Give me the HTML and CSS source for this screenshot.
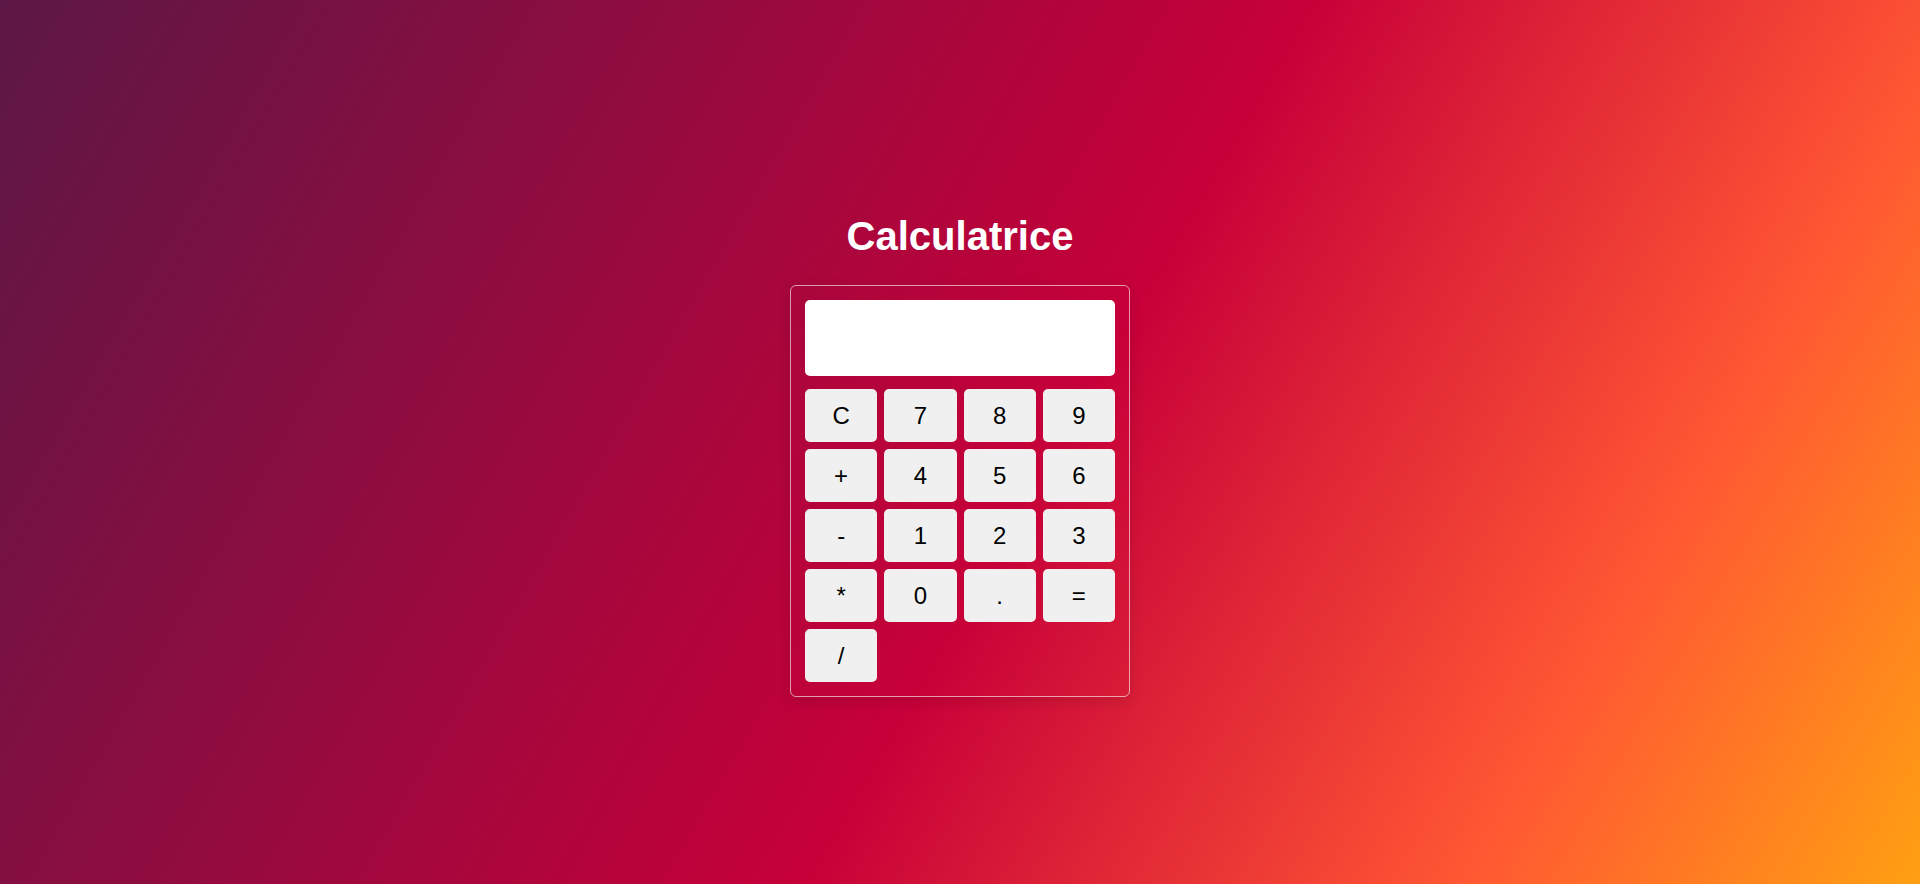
FILE: index.html
```html
<!DOCTYPE html>
<html lang="fr">
<head>
<meta charset="UTF-8">
<title>Calculatrice</title>
<link rel="stylesheet" href="styles.css">
</head>
<body>
  <h1 class="title">Calculatrice</h1>
  <div class="calculator">
    <div class="display"></div>
    <div class="keys">
      <button class="key">C</button>
      <button class="key">7</button>
      <button class="key">8</button>
      <button class="key">9</button>
      <button class="key">+</button>
      <button class="key">4</button>
      <button class="key">5</button>
      <button class="key">6</button>
      <button class="key">-</button>
      <button class="key">1</button>
      <button class="key">2</button>
      <button class="key">3</button>
      <button class="key">*</button>
      <button class="key">0</button>
      <button class="key">.</button>
      <button class="key">=</button>
      <button class="key">/</button>
    </div>
  </div>
</body>
</html>
```
FILE: styles.css
```css
html, body {
  margin: 0;
  padding: 0;
  height: 100%;
}
body {
  font-family: "Liberation Sans", Arial, sans-serif;
  background: linear-gradient(120deg, #5c1846 0%, #8f0c3f 27%, #c70039 54%, #ff5733 81%, #ffa012 100%);
  display: flex;
  flex-direction: column;
  align-items: center;
  justify-content: center;
  height: 100vh;
  overflow: hidden;
}
.title {
  color: #ffffff;
  font-size: 40px;
  font-weight: bold;
  margin: 0.67em 0;
  line-height: normal;
}
.calculator {
  width: 310px;
  padding: 14px;
  border: 1px solid rgba(255, 255, 255, 0.6);
  border-radius: 6px;
  box-shadow: 0 4px 14px rgba(0, 0, 0, 0.12);
}
.display {
  height: 76px;
  background: #ffffff;
  border-radius: 5px;
  margin-bottom: 13px;
}
.keys {
  display: grid;
  grid-template-columns: repeat(4, 1fr);
  gap: 7px;
}
.key {
  height: 53px;
  border: none;
  border-radius: 5px;
  background: #f0f0f0;
  color: #000000;
  font-family: "Liberation Sans", Arial, sans-serif;
  font-size: 24px;
  padding: 0;
}
```
